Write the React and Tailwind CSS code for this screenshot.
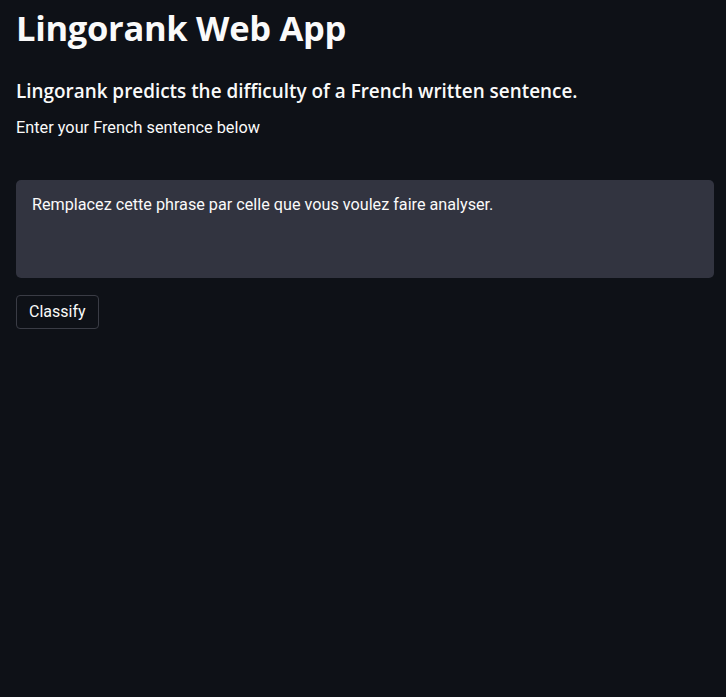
import React from 'react';

const App = () => {
  return (
    <div className="min-h-screen bg-[#0e1117] text-[#fafafa] pl-4 pr-[12px] pt-[6px]" style={{ fontFamily: 'Roboto, "Noto Sans", sans-serif' }}>
      <h1 className="text-[34.5px] leading-[44px] font-bold tracking-[-0.3px]" style={{ fontFamily: '"Open Sans", "Noto Sans", sans-serif' }}>
        Lingorank Web App
      </h1>
      <h3 className="mt-[28px] text-[18.9px] leading-[26px] font-semibold" style={{ fontFamily: '"Open Sans", "Noto Sans", sans-serif' }}>
        Lingorank predicts the difficulty of a French written sentence.
      </h3>
      <p className="mt-[13px] text-[16.3px] leading-[22px]">Enter your French sentence below</p>

      <div className="mt-[41px] h-[98px] rounded-[5px] bg-[#323440] px-4 pt-[14px] text-[16.2px] leading-[22px]">
        Remplacez cette phrase par celle que vous voulez faire analyser.
      </div>

      <button className="mt-[17px] h-[34px] rounded-[4px] border border-[#3a3c45] bg-[#0e1117] px-[12px] text-[16px] text-[#fafafa]">
        Classify
      </button>
    </div>
  );
};

export default App;
